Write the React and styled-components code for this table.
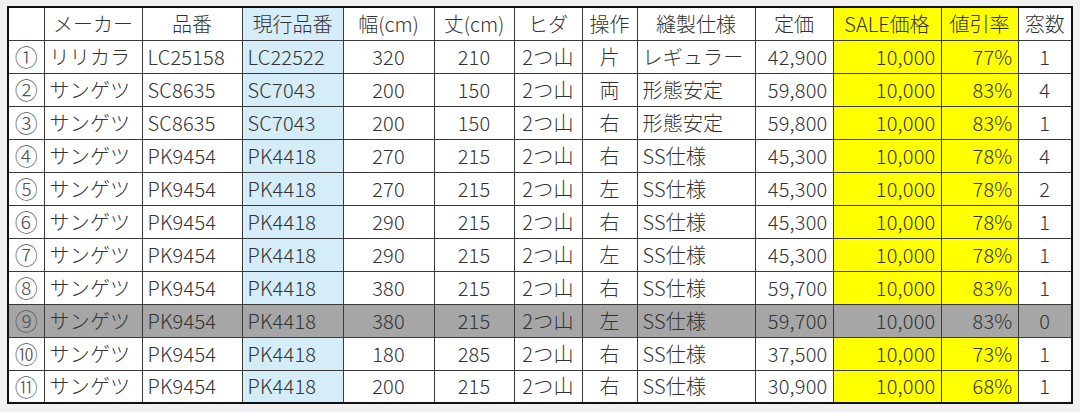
import React from 'react';
import styled, { createGlobalStyle } from 'styled-components';

const columns = [
  { key: 'no', label: '', width: 36, align: 'center' },
  { key: 'maker', label: 'メーカー', width: 98, align: 'left' },
  { key: 'code', label: '品番', width: 100, align: 'left' },
  { key: 'current', label: '現行品番', width: 101, align: 'left', tone: 'blue' },
  { key: 'w', label: '幅(cm)', width: 91, align: 'center' },
  { key: 'h', label: '丈(cm)', width: 80, align: 'center' },
  { key: 'pleat', label: 'ヒダ', width: 68, align: 'center' },
  { key: 'op', label: '操作', width: 55, align: 'center' },
  { key: 'spec', label: '縫製仕様', width: 118, align: 'left' },
  { key: 'list', label: '定価', width: 78, align: 'right' },
  { key: 'sale', label: 'SALE価格', width: 108, align: 'right', tone: 'yellow' },
  { key: 'off', label: '値引率', width: 77, align: 'right', tone: 'yellow' },
  { key: 'win', label: '窓数', width: 54, align: 'center' },
];

const rows = [
  ['①', 'リリカラ', 'LC25158', 'LC22522', '320', '210', '2つ山', '片', 'レギュラー', '42,900', '10,000', '77%', '1'],
  ['②', 'サンゲツ', 'SC8635', 'SC7043', '200', '150', '2つ山', '両', '形態安定', '59,800', '10,000', '83%', '4'],
  ['③', 'サンゲツ', 'SC8635', 'SC7043', '200', '150', '2つ山', '右', '形態安定', '59,800', '10,000', '83%', '1'],
  ['④', 'サンゲツ', 'PK9454', 'PK4418', '270', '215', '2つ山', '右', 'SS仕様', '45,300', '10,000', '78%', '4'],
  ['⑤', 'サンゲツ', 'PK9454', 'PK4418', '270', '215', '2つ山', '左', 'SS仕様', '45,300', '10,000', '78%', '2'],
  ['⑥', 'サンゲツ', 'PK9454', 'PK4418', '290', '215', '2つ山', '右', 'SS仕様', '45,300', '10,000', '78%', '1'],
  ['⑦', 'サンゲツ', 'PK9454', 'PK4418', '290', '215', '2つ山', '左', 'SS仕様', '45,300', '10,000', '78%', '1'],
  ['⑧', 'サンゲツ', 'PK9454', 'PK4418', '380', '215', '2つ山', '右', 'SS仕様', '59,700', '10,000', '83%', '1'],
  ['⑨', 'サンゲツ', 'PK9454', 'PK4418', '380', '215', '2つ山', '左', 'SS仕様', '59,700', '10,000', '83%', '0'],
  ['⑩', 'サンゲツ', 'PK9454', 'PK4418', '180', '285', '2つ山', '右', 'SS仕様', '37,500', '10,000', '73%', '1'],
  ['⑪', 'サンゲツ', 'PK9454', 'PK4418', '200', '215', '2つ山', '右', 'SS仕様', '30,900', '10,000', '68%', '1'],
];

const tones = {
  blue: '#d5ecf9',
  yellow: '#ffff00',
  soldOut: '#a6a6a6',
};

const GlobalStyle = createGlobalStyle`
  html, body {
    margin: 0;
    padding: 0;
    background: #f1f1f1;
  }
  body {
    font-family: 'Noto Sans CJK JP', 'Noto Sans', sans-serif;
    font-weight: 300;
    color: #333;
  }
`;

const Page = styled.div`
  width: 1080px;
  height: 412px;
  box-sizing: border-box;
  padding: 6px 0 0 7px;
`;

const Sheet = styled.table`
  width: 1065px;
  table-layout: fixed;
  border-collapse: collapse;
  border: 2px solid #111;
  background: #fff;
`;

const Row = styled.tr`
  height: 33px;
  background: ${({ $muted }) => ($muted ? tones.soldOut : 'transparent')};
`;

const HeadCell = styled.th`
  font-weight: 300;
  font-size: 20px;
  line-height: 1;
  text-align: center;
  padding: 0 2px;
  border: 1px solid #3a3a3a;
  white-space: nowrap;
  overflow: hidden;
  color: #333;
  background: ${({ $tone }) => (tones[$tone] ? tones[$tone] : 'transparent')};
`;

const Cell = styled.td`
  font-size: ${({ $marker }) => ($marker ? '23px' : '20px')};
  line-height: 1;
  padding: ${({ $marker }) => ($marker ? '0' : '0 5px')};
  text-align: ${({ $align }) => $align};
  border: 1px solid #3a3a3a;
  white-space: nowrap;
  overflow: hidden;
  letter-spacing: ${({ $marker }) => ($marker ? '0' : '0.2px')};
  color: ${({ $marker }) => ($marker ? '#555' : '#333')};
  background: ${({ $tone }) => (tones[$tone] ? tones[$tone] : 'transparent')};
`;

const App = () => (
  <>
    <GlobalStyle />
    <Page>
      <Sheet>
        <colgroup>
          {columns.map((c) => (
            <col key={c.key} style={{ width: c.width }} />
          ))}
        </colgroup>
        <thead>
          <Row>
            {columns.map((c) => (
              <HeadCell key={c.key} $tone={c.tone}>
                {c.label}
              </HeadCell>
            ))}
          </Row>
        </thead>
        <tbody>
          {rows.map((r) => {
            const soldOut = r[12] === '0';
            return (
              <Row key={r[0]} $muted={soldOut}>
                {r.map((v, i) => (
                  <Cell
                    key={columns[i].key}
                    $align={columns[i].align}
                    $tone={soldOut ? undefined : columns[i].tone}
                    $marker={i === 0}
                  >
                    {v}
                  </Cell>
                ))}
              </Row>
            );
          })}
        </tbody>
      </Sheet>
    </Page>
  </>
);

export default App;
